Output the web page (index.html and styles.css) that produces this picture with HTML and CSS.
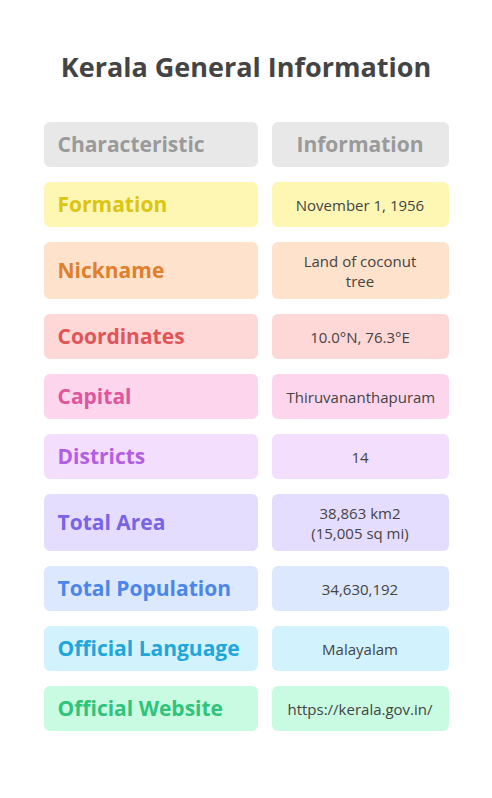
FILE: index.html
```html
<!DOCTYPE html>
<html lang="en">
<head>
<meta charset="utf-8">
<title>Kerala General Information</title>
<link rel="stylesheet" href="styles.css">
</head>
<body>
<main class="page">
  <h1 class="title">Kerala General Information</h1>
  <table class="info">
    <thead>
      <tr class="head">
        <th class="key">Characteristic</th>
        <th class="val">Information</th>
      </tr>
    </thead>
    <tbody>
      <tr class="yellow"><td class="key">Formation</td><td class="val">November 1, 1956</td></tr>
      <tr class="orange"><td class="key">Nickname</td><td class="val">Land of coconut<br>tree</td></tr>
      <tr class="red"><td class="key">Coordinates</td><td class="val">10.0°N, 76.3°E</td></tr>
      <tr class="pink"><td class="key">Capital</td><td class="val">Thiruvananthapuram</td></tr>
      <tr class="purple"><td class="key">Districts</td><td class="val">14</td></tr>
      <tr class="violet"><td class="key">Total Area</td><td class="val">38,863 km2<br>(15,005 sq mi)</td></tr>
      <tr class="blue"><td class="key">Total Population</td><td class="val">34,630,192</td></tr>
      <tr class="cyan"><td class="key">Official Language</td><td class="val">Malayalam</td></tr>
      <tr class="green"><td class="key">Official Website</td><td class="val">https://kerala.gov.in/</td></tr>
    </tbody>
  </table>
</main>
</body>
</html>
```

FILE: styles.css
```css
html, body {
  margin: 0;
  padding: 0;
  background: #ffffff;
}
body {
  font-family: "Open Sans", "Lato", sans-serif;
  color: #444444;
}
.page {
  display: flex;
  flex-direction: column;
  align-items: center;
  padding-top: 50px;
}
.title {
  margin: 0 0 23px 0;
  font-size: 27px;
  line-height: 34px;
  font-weight: 700;
  color: #444444;
}
.info {
  border-collapse: separate;
  border-spacing: 14px 15px;
  table-layout: fixed;
  width: 433px;
}
.info th, .info td {
  border-radius: 6px;
  vertical-align: middle;
}
.key {
  width: 186px;
  text-align: left;
  padding: 8px 14px;
  font-size: 21px;
  line-height: 29px;
  font-weight: 700;
}
.val {
  width: 147px;
  text-align: center;
  padding: 8.5px 15px;
  font-size: 15px;
  line-height: 20px;
  font-weight: 400;
  color: #444444;
}
.head th { background: #e8e8e8; color: #9a9a9a; font-weight: 700; }
.head .val { font-size: 21px; line-height: 29px; padding: 8px 15px; }
.yellow td { background: #fef7b4; }
.yellow .key { color: #dcc512; }
.orange td { background: #fee2cb; }
.orange .key { color: #e07f2c; }
.red td { background: #fed7d7; }
.red .key { color: #e05557; }
.pink td { background: #fdd6ed; }
.pink .key { color: #e0559b; }
.purple td { background: #f3defd; }
.purple .key { color: #b45ee3; }
.violet td { background: #e5ddfd; }
.violet .key { color: #7963e6; }
.blue td { background: #dce8fe; }
.blue .key { color: #4b86e8; }
.cyan td { background: #d2f2fd; }
.cyan .key { color: #1fa6da; }
.green td { background: #c9fbe2; }
.green .key { color: #2fc47a; }
```
